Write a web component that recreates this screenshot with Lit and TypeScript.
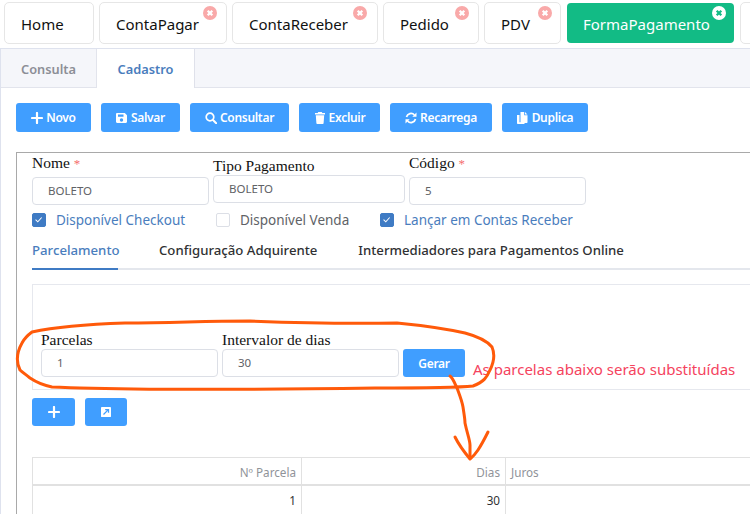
import { LitElement, html, css, svg } from "lit";
import { customElement } from "lit/decorators.js";

const closeIcon = (right: number) => html`<svg class="x" style="right:${right}px" viewBox="0 0 14 14"><circle cx="7" cy="7" r="7" fill="currentColor"></circle><path d="M4.700 4.700l4.600 4.600M9.300 4.700l-4.600 4.600" stroke="var(--xc)" stroke-width="2.300"></path></svg>`;

const icons: Record<string, unknown> = {
  plus: html`<svg class="ic" viewBox="0 0 12 12"><path d="M6 1v10M1 6h10" stroke="#fff" stroke-width="2.200" stroke-linecap="round"></path></svg>`,
  save: html`<svg class="ic" viewBox="0 0 12 12"><path fill="#fff" fill-rule="evenodd" d="M1.200 1h7.600L11 3.200v6.600c0 .7-.5 1.200-1.200 1.200H1.200C.5 11 0 10.500 0 9.800V2.200C0 1.500.5 1 1.200 1zM2 2.500v2.300h5.500V2.500zM5.500 6.300a1.700 1.700 0 1 0 0 3.400 1.700 1.700 0 0 0 0-3.400z"></path></svg>`,
  search: html`<svg class="ic" viewBox="0 0 12 12"><circle cx="5" cy="5" r="3.800" fill="none" stroke="#fff" stroke-width="1.700"></circle><path d="M8 8l3.200 3.200" stroke="#fff" stroke-width="2" stroke-linecap="round"></path></svg>`,
  trash: html`<svg class="ic" viewBox="0 0 12 12"><path fill="#fff" d="M4.200 0h3.600l.5 1H11v1.400H1V1h2.700zM1.800 3.200h8.400l-.6 8c0 .5-.4.8-.8.8H3.200c-.4 0-.8-.3-.8-.8z"></path></svg>`,
  sync: html`<svg class="ic" viewBox="0 0 12 12"><path fill="none" stroke="#fff" stroke-width="1.700" d="M1.500 5A4.600 4.600 0 0 1 9.400 3M10.500 7A4.600 4.600 0 0 1 2.600 9"></path><path fill="#fff" d="M11.500.6v4.200H7.300zM.5 11.400V7.200h4.200z"></path></svg>`,
  copy: html`<svg class="ic" viewBox="0 0 12 12"><path fill="#fff" d="M0 3h2.500v7.200h5V12H.8C.3 12 0 11.700 0 11.200zM3.500 0h3.700v3.300h3.300v7c0 .4-.3.700-.7.700H3.500zM8 0l2.500 2.500H8z"></path></svg>`,
};

const annotation = svg`
  <path d="M32 332C60 326 95 324 125 323C175 323 200 321 250 321C300 323 340 324 397 323C418 325 442 328 465 333C480 337 488 342 492 347C495 354 494 362 490 370C487 377 484 382 473 386C455 388 430 388 375 388C300 389 150 390 80 388C65 388 58 387 52 387C42 385 36 382 30 378C25 374 22 372 20 370C16 362 17 352 22 343C24 339 28 335 32 332Z" />
  <path d="M450 376C453 378 455 384 457 388C460 396 462 401 463 407C464 414 465 419 465 423C467 433 470 440 470 445L470 458" />
  <path d="M455 437C459 445 465 453 470 459C474 456 476 453 478 450C482 444 485 438 488 432" />
`;

@customElement("app-root")
export class AppRoot extends LitElement {
  static styles = css`
    :host {
      display: block;
      width: 750px;
      height: 514px;
      overflow: hidden;
      position: relative;
      background: #fff;
      font-family: "Noto Sans", "Open Sans", sans-serif;
      font-size: 13px;
      color: #495057;
    }
    .tabs {
      display: flex;
      gap: 5px;
      height: 49px;
      padding: 2px 0 0 4px;
      box-sizing: border-box;
      white-space: nowrap;
      border-bottom: 1px solid #dee2ee;
    }
    .tab {
      position: relative;
      flex: none;
      box-sizing: border-box;
      height: 42px;
      padding-left: 16px;
      border: 1px solid #e6e6e6;
      border-radius: 5px;
      background: #fff;
      font-size: 15px;
      line-height: 42px;
      color: #111;
      --xc: #fff;
    }
    .tab.on {
      background: #12bb85;
      background-clip: padding-box;
      border-color: transparent;
      color: #fff;
    }
    .x {
      position: absolute;
      top: 3px;
      width: 14px;
      height: 14px;
      color: #f9a9a9;
    }
    .tab.on .x { color: #fff; --xc: #12bb85; }
    .page {
      border-left: 1px solid #dee2ee;
      height: 465px;
      box-sizing: border-box;
    }
    .nav {
      display: flex;
      height: 39px;
      background: #f5f6fa;
      border-bottom: 1px solid #e2e4ec;
      box-sizing: border-box;
      font-weight: 600;
      font-size: 12.800px;
    }
    .nav div {
      line-height: 41px;
      text-align: center;
      color: #8c8e96;
      box-sizing: border-box;
    }
    .nav .c1 { width: 96px; border-right: 1px solid #e2e4ec; }
    .nav .c2 {
      width: 98px;
      background: #fff;
      color: #4a7dbd;
      height: 39px;
      border-right: 1px solid #dfe1ea;
    }
    .bar { display: flex; gap: 10px; padding: 15px 0 0 15px; }
    .btn {
      display: flex;
      align-items: center;
      justify-content: center;
      gap: 3px;
      height: 29px;
      box-sizing: border-box;
      background: #409eff;
      border-radius: 3px;
      color: #fff;
      font-size: 12px;
      font-weight: 600;
      letter-spacing: -0.3px;
    }
    .ic { width: 12px; height: 12px; flex: none; }
    .ic.sq { width: 10px; height: 10px; }
    .form {
      margin: 20px 0 0 15px;
      width: 800px;
      height: 400px;
      box-sizing: border-box;
      border: 1px solid #a9a9a9;
      border-width: 1px 0 0 1px;
      padding-left: 15px;
    }
    .row3 { display: flex; height: 53px; gap: 4px; }
    .field { width: 177px; display: flex; flex-direction: column; flex: none; }
    .field.wide { width: 192px; }
    .field label {
      font-family: "Liberation Serif", serif;
      font-size: 15.500px;
      line-height: 17px;
      color: #111;
      white-space: nowrap;
    }
    .field.a { padding-top: 1px; }
    .field.a label { height: 23px; }
    .field.b { padding-top: 4px; }
    .field.b label { height: 18px; }
    .req { color: #f56c6c; font-size: 13px; }
    .inp {
      box-sizing: border-box;
      height: 28px;
      border: 1px solid #dcdfe6;
      border-radius: 4px;
      padding-left: 15px;
      font-size: 11.500px;
      line-height: 26px;
      color: #606266;
      background: #fff;
    }
    .checks { display: flex; height: 22px; margin-top: 6px; font-size: 13.500px; align-items: flex-start; }
    .ck { display: flex; align-items: center; height: 16px; gap: 10px; white-space: nowrap; color: #606266; }
    .ck.on { color: #4a7dbd; }
    .box {
      box-sizing: border-box;
      width: 14px;
      height: 14px;
      border: 1px solid #dcdfe6;
      border-radius: 2px;
      background: #fff;
      display: block;
      flex: none;
    }
    .ck.on .box { background: #3f7bc4; border-color: #3f7bc4; }
    .ckmark { display: block; width: 12px; height: 12px; }
    .c-a { width: 184px; }
    .c-b { width: 164px; }
    .sub {
      display: flex;
      gap: 41px;
      height: 35px;
      margin-top: 1px;
      border-bottom: 2px solid #e4e7ed;
      box-sizing: border-box;
      font-size: 13.200px;
      font-weight: 500;
      color: #303133;
      white-space: nowrap;
      line-height: 31px;
    }
    .sub .act {
      color: #4a7dbd;
      height: 35px;
      box-sizing: border-box;
      border-bottom: 2px solid #3f7bc4;
      width: 86px;
    }
    .panel {
      margin-top: 14px;
      height: 106px;
      box-sizing: border-box;
      border: 1px solid #e6e8ee;
      border-width: 1px 0 1px 1px;
      padding: 46px 0 0 8px;
    }
    .gen { display: flex; gap: 4px; align-items: flex-end; }
    .gen .field label { height: 18px; }
    .gerar { width: 62px; height: 28px; }
    .warn {
      color: #f5435e;
      font-size: 15px;
      white-space: nowrap;
      margin-left: 4px;
      line-height: 19px;
      position: relative;
      top: 2px;
    }
    .mini { display: flex; gap: 10px; margin-top: 8px; }
    .mini .btn { height: 28px; }
    .tbl {
      margin-top: 31px;
      display: grid;
      grid-template-columns: 269px 204px 1fr;
      border-left: 1px solid #e1e1e1;
      border-top: 1px solid #e1e1e1;
      font-size: 11.700px;
    }
    .tbl > div {
      box-sizing: border-box;
      border-right: 1px solid #e1e1e1;
      padding: 0 5px;
    }
    .th {
      height: 28px;
      line-height: 28px;
      color: #909399;
      border-bottom: 2px solid #e1e1e1;
    }
    .td { height: 30px; line-height: 29px; color: #303133; }
    .r { text-align: right; }
    .ann {
      position: absolute;
      left: 0;
      top: 0;
      width: 750px;
      height: 514px;
      pointer-events: none;
      fill: none;
      stroke: #ff5a0a;
      stroke-width: 3;
      stroke-linecap: round;
      stroke-linejoin: round;
    }
  `;

  private tab(label: string, w: number, closeRight = 0, on = false) {
    return html`<div class="tab ${on ? "on" : ""}" style="width:${w}px">${label}${closeRight ? closeIcon(closeRight) : ""}</div>`;
  }
  private btn(icon: string, label: string, w: number) {
    return html`<div class="btn" style="width:${w}px">${icons[icon]}${label}</div>`;
  }
  private ck(label: string, on: boolean, cls: string) {
    return html`<div class="ck ${on ? "on" : ""} ${cls}"><span class="box">${on
        ? html`<svg class="ckmark" viewBox="0 0 14 14"><path d="M3 6.500l2.600 2.600 4.500-5" fill="none" stroke="#fff" stroke-width="1.200"></path></svg>`
        : ""}</span>${label}</div>`;
  }

  render() {
    return html`
      <div class="tabs">
        ${this.tab("Home", 90)}
        ${this.tab("ContaPagar", 128, 9)}
        ${this.tab("ContaReceber", 146, 10)}
        ${this.tab("Pedido", 96, 9)}
        ${this.tab("PDV", 77, 8)}
        ${this.tab("FormaPagamento", 169, 8, true)}
        ${this.tab("", 60)}
      </div>
      <div class="page">
        <div class="nav"><div class="c1">Consulta</div><div class="c2">Cadastro</div></div>
        <div class="bar">
          ${this.btn("plus", "Novo", 75)}
          ${this.btn("save", "Salvar", 79)}
          ${this.btn("search", "Consultar", 99)}
          ${this.btn("trash", "Excluir", 81)}
          ${this.btn("sync", "Recarrega", 102)}
          ${this.btn("copy", "Duplica", 86)}
        </div>
        <div class="form">
          <div class="row3">
            <div class="field a"><label>Nome <span class="req">*</span></label><div class="inp">BOLETO</div></div>
            <div class="field b wide"><label>Tipo Pagamento</label><div class="inp">BOLETO</div></div>
            <div class="field a"><label>Código <span class="req">*</span></label><div class="inp">5</div></div>
          </div>
          <div class="checks">
            ${this.ck("Disponível Checkout", true, "c-a")}
            ${this.ck("Disponível Venda", false, "c-b")}
            ${this.ck("Lançar em Contas Receber", true, "")}
          </div>
          <div class="sub">
            <div class="act">Parcelamento</div>
            <div>Configuração Adquirente</div>
            <div>Intermediadores para Pagamentos Online</div>
          </div>
          <div class="panel">
            <div class="gen">
              <div class="field"><label>Parcelas</label><div class="inp">1</div></div>
              <div class="field"><label>Intervalor de dias</label><div class="inp">30</div></div>
              <div class="btn gerar">Gerar</div>
              <div class="warn">As parcelas abaixo serão substituídas</div>
            </div>
          </div>
          <div class="mini">
            <div class="btn" style="width:43px">${icons.plus}</div>
            <div class="btn" style="width:42px"><svg class="ic sq" viewBox="0 0 12 12"><rect x="0" y="0" width="12" height="12" rx="1" fill="#fff"></rect><path d="M3 9L8.500 3.500M5 3H9V7" stroke="#409eff" stroke-width="1.500" fill="none"></path></svg></div>
          </div>
          <div class="tbl">
            <div class="th r">Nº Parcela</div><div class="th r">Dias</div><div class="th">Juros</div>
            <div class="td r">1</div><div class="td r">30</div><div class="td"></div>
          </div>
        </div>
      </div>
      <svg class="ann" viewBox="0 0 750 514">${annotation}</svg>
    `;
  }
}
